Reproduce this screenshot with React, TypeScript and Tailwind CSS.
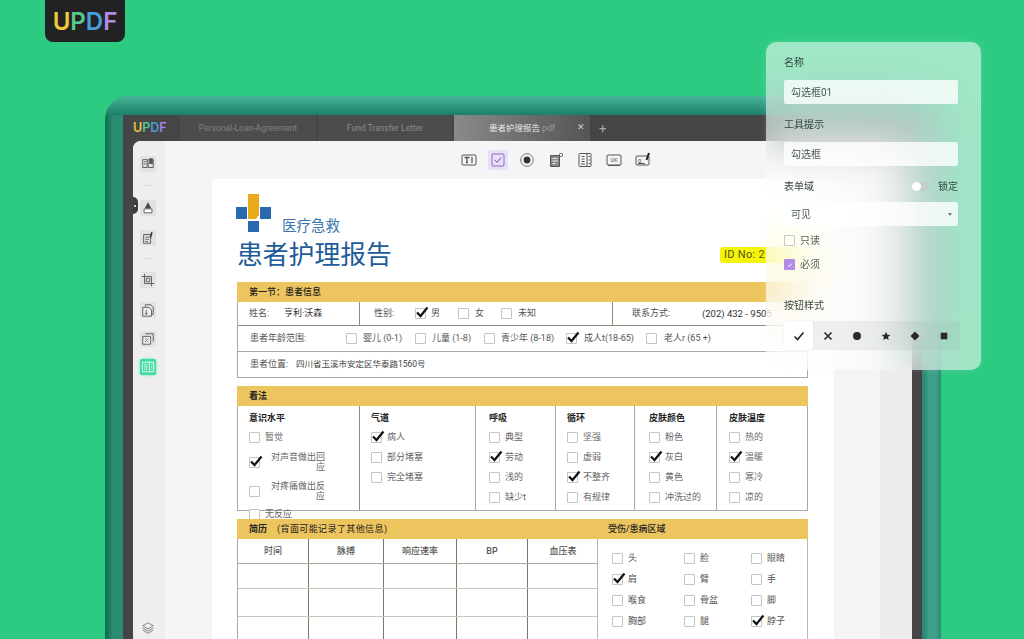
import type { ReactNode } from "react";

const font = "font-['Roboto','Noto_Sans_CJK_SC',sans-serif]";

// Form checkbox, the check mark pokes out of the box like in the PDF
function Box({ checked = false }: { checked?: boolean }) {
  return (
    <span className="relative inline-block w-[11px] h-[11px] shrink-0 border border-[#c4c4c4] rounded-[1px] bg-white">
      {checked && (
        <svg viewBox="0 0 14 12" className="absolute left-[-1px] top-[-3px] w-[14px] h-[12px]">
          <path d="M2 6.5 L5.5 10 L12.5 1.5" fill="none" stroke="#111" strokeWidth="2.2" />
        </svg>
      )}
    </span>
  );
}

function Check({ label, checked, gap = 5, w }: { label: string; checked?: boolean; gap?: number; w?: number }) {
  return (
    <div className="flex items-center shrink-0" style={{ width: w, gap }}>
      <Box checked={checked} />
      <span className="whitespace-nowrap">{label}</span>
    </div>
  );
}

function Column({ title, items, width, pl }: { title: string; items: [string, boolean?][]; width: number; pl: number }) {
  return (
    <div className="shrink-0 border-r border-[#a8a89c] last:border-r-0 h-full" style={{ width, paddingLeft: pl }}>
      <div className="font-bold text-[#222] h-[13px] leading-[13px] mt-[6px] mb-[7px]">{title}</div>
      <div className="flex flex-col gap-[9px]">
        {items.map(([label, c]) => (
          <Check key={label} label={label} checked={c} />
        ))}
      </div>
    </div>
  );
}

function SectionHead({ children, className = "" }: { children: ReactNode; className?: string }) {
  return <div className={`h-[20px] bg-[#edc55f] flex items-center text-[#222] ${className}`}>{children}</div>;
}

function ToolIcon({ children, on }: { children: ReactNode; on?: boolean }) {
  return (
    <div className={`w-[20px] h-[20px] flex items-center justify-center rounded-[3px] ${on ? "bg-[#eadff8]" : ""}`}>
      <svg viewBox="0 0 16 16" className="w-[16px] h-[16px]" fill="none" stroke={on ? "#8a68bd" : "#555"} strokeWidth="1">
        {children}
      </svg>
    </div>
  );
}

function SideIcon({ children, active }: { children: ReactNode; active?: boolean }) {
  return (
    <div
      className={`w-[16px] h-[16px] flex items-center justify-center rounded-[2px] ${
        active ? "bg-[#3ddba0] shadow-[0_0_3px_#5ee6b4]" : "bg-[#e2e2e4]"
      }`}
    >
      <svg viewBox="0 0 16 16" className="w-[14px] h-[14px]" fill="none" stroke={active ? "#fff" : "#555"} strokeWidth="1">
        {children}
      </svg>
    </div>
  );
}

function Sidebar() {
  return (
    <div className="w-[32px] shrink-0 bg-[#eeeef0] flex flex-col items-center pt-[15px] pr-[2px] relative">
      <SideIcon>
        <path d="M2 3h5v9H2zM8 3h6v9H8zM3.5 5.5h2M3.5 8h2" />
        <path d="M10 2h3v6l-1.5-1L10 8z" fill="#555" />
      </SideIcon>
      <div className="w-[7px] h-px bg-[#d6d6d8] mt-[13px]" />
      <div className="mt-[14px]">
        <SideIcon>
          <path d="M5 8 8 2l3 6z" fill="#444" />
          <path d="M3.5 9h9v4.5h-9z" fill="#fff" />
        </SideIcon>
      </div>
      <div className="mt-[14px]">
        <SideIcon>
          <path d="M3 4h8v10H3zM5 7h4M5 9.5h4M5 12h3" />
          <path d="M12.5 1.5 10.5 8" stroke="#333" strokeWidth="1.8" />
        </SideIcon>
      </div>
      <div className="w-[7px] h-px bg-[#d6d6d8] mt-[12px]" />
      <div className="mt-[13px]">
        <SideIcon>
          <path d="M4 1v11h11M1 4h11v11" />
          <path d="M6 6h4v4H6z" />
        </SideIcon>
      </div>
      <div className="mt-[14px]">
        <SideIcon>
          <path d="M5 4V2h6l3 3v8h-2" />
          <path d="M2 5h7l3 3v7H2z" fill="#eee" />
          <path d="M6 8v5M4.5 11.5 6 13l1.5-1.5" />
        </SideIcon>
      </div>
      <div className="mt-[13px]">
        <SideIcon>
          <path d="M5 2h9v9" />
          <path d="M2 5h9v9H2z" fill="#eee" />
          <path d="M4.5 11.5 8.5 7.5M5 8h1M7.5 11h1" />
        </SideIcon>
      </div>
      <div className="mt-[12px]">
        <SideIcon active>
          <path d="M1.5 2.5h13v11h-13zM9.5 2.5v11M3.5 5.5h4M3.5 8h4M3.5 10.5h4M11.5 5.5h1.5M11.5 8h1.5M11.5 10.5h1.5" />
        </SideIcon>
      </div>
      <svg viewBox="0 0 16 16" className="w-[14px] h-[14px] mt-[246px]" fill="none" stroke="#777" strokeWidth="1">
        <path d="M8 2 14 5.5 8 9 2 5.5z" />
        <path d="M2 8 8 11.5 14 8M2 10.5 8 14l6-3.5" />
      </svg>
      <div className="absolute left-0 top-[56px] w-[5px] h-[17px] rounded-r-full bg-[#3e3e40] flex items-center">
        <span className="w-[2px] h-[2px] rounded-full bg-white ml-[1px]" />
      </div>
    </div>
  );
}

function Toolbar() {
  return (
    <div className="h-[38px] shrink-0 bg-[#f5f5f7] flex items-center gap-[9px] pl-[294px]">
      <ToolIcon>
        <rect x="1" y="3" width="14" height="10" rx="1" />
        <path d="M3.5 5.5h5M6 5.5v5M5 10.5h2M11 5v6" strokeWidth="1.3" />
      </ToolIcon>
      <ToolIcon on>
        <rect x="2" y="2" width="12" height="12" rx="1" />
        <path d="M5 8l2.2 2.5L11 5.5" stroke="#6d5a8c" />
      </ToolIcon>
      <ToolIcon>
        <circle cx="8" cy="8" r="6.3" stroke="#777" />
        <circle cx="8" cy="8" r="3.4" fill="#333" stroke="none" />
      </ToolIcon>
      <ToolIcon>
        <path d="M2.5 3.5h9v11h-9z" fill="#888" />
        <path d="M4.5 6.5h5M4.5 9h5M4.5 11.5h3" stroke="#eee" />
        <rect x="11.5" y="1.5" width="3" height="3" rx="1" />
      </ToolIcon>
      <ToolIcon>
        <rect x="2" y="1.5" width="12" height="13" rx="1" />
        <path d="M10 1.5v13M4.5 4.5h3M4.5 7h3M4.5 9.5h3M4 12h4M11.5 4.5h1.5M11.5 8h1.5M11.5 11.5h1.5" />
      </ToolIcon>
      <ToolIcon>
        <rect x="1" y="3" width="14" height="10" rx="1" />
        <path d="M2 13.5h12" strokeWidth="1.2" />
        <text x="8" y="10" textAnchor="middle" fontSize="5.5" fill="#444" stroke="none" fontFamily="Roboto">
          OK
        </text>
      </ToolIcon>
      <ToolIcon>
        <rect x="1" y="4" width="13" height="9" rx="1" />
        <path d="M3 11.5h7" />
        <text x="3" y="10.5" fontSize="6" fill="#444" stroke="none" fontFamily="Roboto">
          0
        </text>
        <path d="M14 1 11.5 8" stroke="#222" strokeWidth="2" />
      </ToolIcon>
    </div>
  );
}

function PatientInfo() {
  return (
    <div className="border-x border-b border-[#a8a89c] w-[571px] text-[#555]">
      <SectionHead className="-mx-px pl-[12px] font-medium">第一节：患者信息</SectionHead>
      <div className="flex h-[24px] border-b border-[#8d8d80]">
        <div className="w-[122px] flex items-center pl-[11px] border-r border-[#8d8d80]">
          <span className="w-[35px]">姓名:</span>
          <span className="text-[#333]">亨利·沃森</span>
        </div>
        <div className="w-[253px] flex items-center pl-[14px] border-r border-[#8d8d80]">
          <span className="w-[41px]">性别:</span>
          <Check label="男" checked w={43} />
          <Check label="女" w={43} gap={6} />
          <Check label="未知" gap={6} />
        </div>
        <div className="flex items-center pl-[19px] whitespace-nowrap">
          <span className="w-[70px]">联系方式:</span>
          <span className="text-[#333] text-[9.5px]">(202) 432 - 9505</span>
        </div>
      </div>
      <div className="flex items-center h-[26px] border-b border-[#a8a89c] pl-[12px]">
        <span className="w-[96px] shrink-0">患者年龄范围:</span>
        <Check label="婴儿 (0-1)" gap={6} w={69} />
        <Check label="儿童 (1-8)" gap={6} w={69} />
        <Check label="青少年 (8-18)" gap={6} w={82} />
        <Check label="成人t(18-65)" gap={7} checked w={80} />
        <Check label="老人r (65 +)" gap={7} />
      </div>
      <div className="flex items-center h-[25px] pl-[12px]">
        <span className="w-[46px] shrink-0">患者位置:</span>
        <span className="text-[#444] text-[8.5px]">四川省玉溪市安定区华泰路1560号</span>
      </div>
    </div>
  );
}

function Opinion() {
  return (
    <div className="relative w-[571px] mt-[8px] text-[#666]">
      <SectionHead className="pl-[12px] font-bold">看法</SectionHead>
      <div className="flex h-[105px] border-x border-b border-[#a8a89c]">
        <div className="w-[122px] shrink-0 border-r border-[#8d8d80] pl-[11px] pr-[34px]">
          <div className="font-bold text-[#222] h-[13px] leading-[13px] mt-[6px] mb-[7px]">意识水平</div>
          <Check label="暂觉" />
          <div className="flex items-center mt-[9px] leading-[10px]">
            <Box checked />
            <span className="ml-auto text-right w-[56px]">对声音做出回应</span>
          </div>
          <div className="flex items-center mt-[9px] leading-[10px]">
            <Box />
            <span className="ml-auto text-right w-[56px]">对疼痛做出反应</span>
          </div>
          <div className="mt-[8px]">
            <Check label="无反应" />
          </div>
        </div>
        <Column width={116} pl={11} title="气道" items={[["病人", true], ["部分堵塞"], ["完全堵塞"]]} />
        <Column width={80} pl={13} title="呼吸" items={[["典型"], ["劳动", true], ["浅的"], ["缺少t"]]} />
        <Column width={79} pl={11} title="循环" items={[["坚强"], ["虚弱"], ["不整齐", true], ["有规律"]]} />
        <Column width={82} pl={14} title="皮肤颜色" items={[["粉色"], ["灰白", true], ["黄色"], ["冲洗过的"]]} />
        <Column width={91} pl={12} title="皮肤温度" items={[["热的"], ["温暖", true], ["寒冷"], ["凉的"]]} />
      </div>
    </div>
  );
}

function History() {
  const cols = [
    { name: "时间", w: 71 },
    { name: "脉搏", w: 75 },
    { name: "响应速率", w: 73 },
    { name: "BP", w: 71 },
    { name: "血压表", w: 70 },
  ];
  const areas: [string, boolean?][] = [
    ["头"], ["脸"], ["眼睛"],
    ["肩", true], ["臂"], ["手"],
    ["喉食"], ["骨盆"], ["脚"],
    ["胸部"], ["腿"], ["脖子", true],
  ];
  return (
    <div className="relative z-10 flex w-[571px] mt-[8px] text-[#555]">
      <div className="w-[360px] shrink-0">
        <SectionHead className="pl-[12px] gap-[10px]">
          <b>简历</b>
          <span className="tracking-[0.4px]">(背面可能记录了其他信息)</span>
        </SectionHead>
        <div className="border-l border-[#a8a89c]">
          <div className="flex h-[25px] border-b border-[#a8a89c]">
            {cols.map((c) => (
              <div
                key={c.name}
                className="flex items-center justify-center font-medium border-r border-[#77776a] last:border-r-0 shrink-0"
                style={{ width: c.w }}
              >
                {c.name}
              </div>
            ))}
          </div>
          {[25, 28, 30].map((h, i) => (
            <div key={i} className="flex border-b border-[#c8c8bc]" style={{ height: h }}>
              {cols.map((c) => (
                <div key={c.name} className="border-r border-[#77776a] last:border-r-0 shrink-0" style={{ width: c.w }} />
              ))}
            </div>
          ))}
        </div>
      </div>
      <div className="flex-1 border-x border-[#b8b8ac]">
        <SectionHead className="pl-[11px] font-medium -mx-px">受伤/患病区域</SectionHead>
        <div className="grid grid-cols-[72px_67px_1fr] gap-y-[10px] pl-[14px] pt-[14px]">
          {areas.map(([a, c]) => (
            <Check key={a} label={a} checked={c} />
          ))}
        </div>
      </div>
    </div>
  );
}

function Page() {
  return (
    <div className={`w-[622px] h-full bg-white ml-[47px] shrink-0 overflow-hidden text-[9px] leading-[11px] pl-[25px] ${font}`}>
      <div className="flex items-end h-[53px]">
        <svg viewBox="0 0 35 38" className="w-[35px] h-[38px] ml-[-1px]">
          <rect x="0" y="13" width="11" height="12" fill="#2a69b0" />
          <rect x="24" y="13" width="11" height="12" fill="#2a69b0" />
          <rect x="12" y="27" width="11" height="11" fill="#2a69b0" />
          <path d="M12 0h11v21l-3 4h-8z" fill="#eba91e" />
        </svg>
        <span className="text-[14.5px] leading-[18px] text-[#3a76ad] ml-[11px] mb-[-2px] font-['Noto_Sans_CJK_SC',sans-serif]">
          医疗急救
        </span>
      </div>
      <div className="flex items-center h-[36px] mt-[3px]">
        <span className="text-[25.8px] leading-[36px] text-[#1d5c99] font-['Noto_Sans_CJK_SC',sans-serif]">
          患者护理报告
        </span>
        <span className="ml-auto mr-[26px] mt-[3px] h-[16px] w-[88px] rounded-[3px] bg-[#f6f30c] text-[11px] leading-[16px] pl-[4px] text-[#55540f] tracking-[0.3px]">
          ID No: 2
        </span>
      </div>
      <div className="mt-[11px]">
        <PatientInfo />
        <Opinion />
        <History />
      </div>
    </div>
  );
}

function Frame() {
  return (
    <div className="ml-[105px] mt-[54px] w-[836px] h-[543px] rounded-t-[24px] overflow-hidden bg-[linear-gradient(90deg,#0b6a50_0%,#2b8c74_1%,#2b8c74_98%,#3f9f89_98.6%,#3f9f89_99.4%,#2b8c74_100%)] flex flex-col">
      <div className="h-[19px] shrink-0 bg-gradient-to-b from-[#45b69a] to-[#1c7f68]" />
      <div className="mx-[18px] mr-[19px] flex-1 bg-[#454547] flex flex-col">
        <div className={`h-[26px] shrink-0 flex items-center text-[8.5px] text-[#8f8f8f] ${font}`}>
          <div className="w-[57px] pl-[10px] text-[12.5px] font-semibold font-['Inter',sans-serif] shrink-0">
            <span className="text-[#e8c53c]">U</span>
            <span className="text-[#52c48c]">P</span>
            <span className="text-[#4a9ad6]">D</span>
            <span className="text-[#a884e2]">F</span>
          </div>
          <div className="w-[136px] h-full bg-[#4c4c4e] flex items-center justify-center shrink-0 text-[#808080]">
            Personal-Loan-Agreement
          </div>
          <div className="w-[134px] h-full ml-[2px] bg-[#4c4c4e] flex items-center justify-center shrink-0 text-[#8a8a8a]">
            Fund Transfer Letter
          </div>
          <div className="w-[136px] h-full ml-[2px] bg-gradient-to-r from-[#8a8a8a] to-[#555557] flex items-center justify-center relative shrink-0 text-[#e8e8e8]">
            患者护理报告<span className="text-[#9a9a9a]">.pdf</span>
            <span className="absolute right-[5px] text-[9px] text-[#ccc]">✕</span>
          </div>
          <span className="ml-[9px] text-[13px] leading-none text-[#aaa]">+</span>
        </div>
        <div className="ml-[10px] mr-[10px] flex-1 min-h-0 flex rounded-tl-[8px] overflow-hidden bg-[#f5f5f7]">
          <Sidebar />
          <div className="flex-1 min-w-0 flex flex-col">
            <Toolbar />
            <div className="flex flex-1 min-h-0">
              <Page />
              <div className="w-[46px] shrink-0 bg-[#f4f4f6]" />
              <div className="flex-1 bg-[#ececee]" />
            </div>
          </div>
        </div>
      </div>
    </div>
  );
}

function Field({ children, arrow }: { children: ReactNode; arrow?: boolean }) {
  return (
    <div className="h-[24px] w-[174px] bg-white/80 rounded-[2px] flex items-center px-[7px] text-[#4a5a52] text-[10px]">
      {children}
      {arrow && <span className="ml-auto w-0 h-0 border-x-[2.5px] border-x-transparent border-t-[3px] border-t-[#777] mr-[-1px]" />}
    </div>
  );
}

function Panel() {
  return (
    <div
      className={`absolute left-[766px] top-[42px] w-[215px] h-[328px] rounded-[10px] backdrop-blur-[24px] bg-[#ffffff8c] shadow-[0_0_6px_rgba(255,255,255,0.15)] pl-[18px] pr-[23px] text-[10px] text-[#35453d] z-20 ${font}`}
    >
      <div className="h-[14px] leading-[14px] mt-[14px] mb-[10px]">名称</div>
      <Field>勾选框01</Field>
      <div className="h-[14px] leading-[14px] mt-[14px] mb-[10px]">工具提示</div>
      <Field>勾选框</Field>
      <div className="flex items-center h-[14px] mt-[13px] mb-[9px]">
        <span>表单域</span>
        <span className="ml-auto w-[17px] h-[9px] rounded-full bg-[#c9c9c9]/70 flex items-center">
          <span className="w-[9px] h-[9px] rounded-full bg-white" />
        </span>
        <span className="ml-[9px]">锁定</span>
      </div>
      <Field arrow>可见</Field>
      <div className="flex items-center gap-[5px] mt-[7px] text-[#55625c]">
        <span className="w-[11px] h-[11px] border border-[#c8c8c8] rounded-[1px] bg-white/40" />
        只读
      </div>
      <div className="flex items-center gap-[5px] mt-[9px] text-[#55625c]">
        <span className="w-[11px] h-[11px] rounded-[1px] bg-[#b48ae6] flex items-center justify-center">
          <svg viewBox="0 0 10 10" className="w-[8px] h-[8px]" fill="none" stroke="#fff" strokeWidth="1.2">
            <path d="M2.5 5 4.3 7 7.5 3" />
          </svg>
        </span>
        必须
      </div>
      <div className="h-[14px] leading-[14px] mt-[27px] mb-[8px]">按钮样式</div>
      <div className="flex w-[176px] h-[29px] rounded-[3px] bg-[#9aa5a0]/15">
        <div className="w-[29px] bg-white rounded-[3px] shadow-[0_0_2px_rgba(0,0,0,0.08)] flex items-center justify-center">
          <svg viewBox="0 0 12 12" className="w-[12px] h-[12px]" fill="none" stroke="#222" strokeWidth="1.6">
            <path d="M1.5 6.5 4.5 9.5 10.5 2.5" />
          </svg>
        </div>
        {[
          <path key="x" d="M2.5 2.5l7 7M9.5 2.5l-7 7" stroke="#2a2a2a" strokeWidth="1.7" />,
          <circle key="c" cx="6" cy="6" r="4" fill="#2a2a2a" />,
          <path key="s" d="M6 1.8l1.3 2.9 3.1.3-2.4 2 .8 3.1L6 8.5l-2.8 1.6.8-3.1-2.4-2 3.1-.3z" fill="#2a2a2a" />,
          <path key="d" d="M6 1.5 10.5 6 6 10.5 1.5 6z" fill="#2a2a2a" />,
          <rect key="r" x="2.7" y="2.7" width="6.6" height="6.6" fill="#2a2a2a" />,
        ].map((shape, i) => (
          <div key={i} className="w-[29px] flex items-center justify-center">
            <svg viewBox="0 0 12 12" className="w-[12px] h-[12px]" fill="none">
              {shape}
            </svg>
          </div>
        ))}
      </div>
    </div>
  );
}

export default function App() {
  return (
    <div className="relative w-[1024px] h-[639px] overflow-hidden bg-[#2dca82]">
      <div className="ml-[45px] w-[80px] h-[42px] rounded-b-[8px] bg-[#222224] flex items-center justify-center pt-[2px] text-[24px] font-semibold font-['Inter',sans-serif]">
        <span className="text-[#f0c93a]">U</span>
        <span className="text-[#55c98a]">P</span>
        <span className="text-[#4a9fd8]">D</span>
        <span className="text-[#b48ae8]">F</span>
      </div>
      <Frame />
      <Panel />
    </div>
  );
}
